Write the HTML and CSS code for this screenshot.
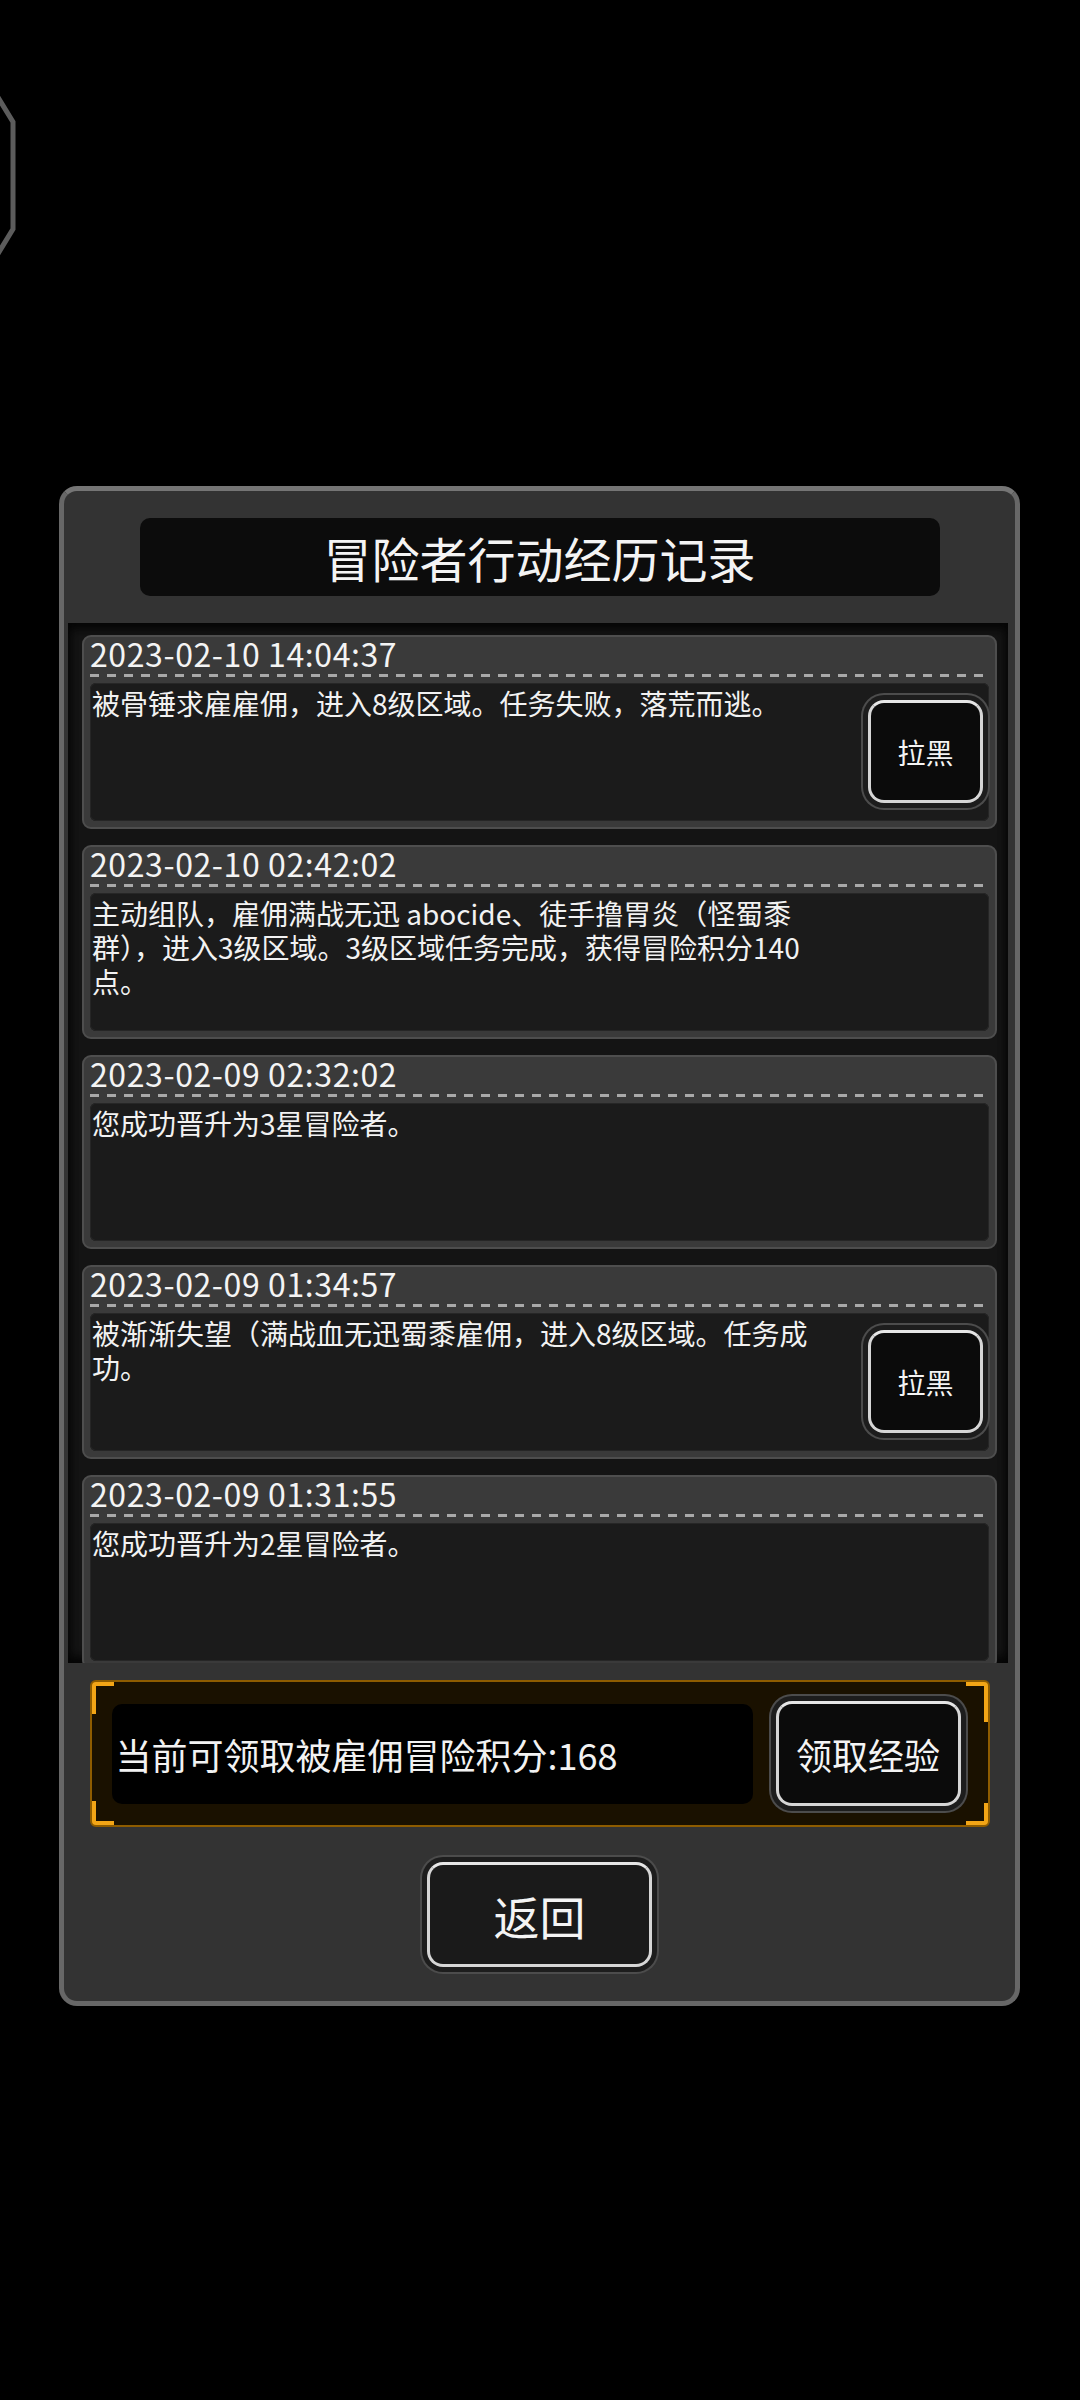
FILE: index.html
```html
<!DOCTYPE html>
<html lang="zh-CN">
<head>
  <meta charset="UTF-8" />
  <meta name="viewport" content="width=device-width, initial-scale=1.0" />
  <title>冒险者行动经历记录</title>
  <link rel="stylesheet" href="styles.css">
</head>
<body>
  <!-- half-hidden side tab on the left edge -->
  <svg class="side-tab" width="24" height="170" viewBox="0 0 24 170">
    <polyline points="-4,-2 13,26 13,133 -4,161" fill="none" stroke="#5c5c5c" stroke-width="5" stroke-linejoin="miter" />
  </svg>

  <div class="panel">
    <div class="panel-title">冒险者行动经历记录</div>

    <div class="log">
      <div class="entry">
        <div class="entry-time">2023-02-10 14:04:37</div>
        <div class="entry-rule"></div>
        <div class="entry-body">
          <p class="entry-text">被骨锤求雇雇佣，进入8级区域。任务失败，落荒而逃。</p>
          <button class="btn btn-small" type="button">拉黑</button>
        </div>
      </div>

      <div class="entry">
        <div class="entry-time">2023-02-10 02:42:02</div>
        <div class="entry-rule"></div>
        <div class="entry-body">
          <p class="entry-text">主动组队，雇佣满战无迅 abocide、徒手撸胃炎（怪蜀黍群），进入3级区域。3级区域任务完成，获得冒险积分140点。</p>
        </div>
      </div>

      <div class="entry">
        <div class="entry-time">2023-02-09 02:32:02</div>
        <div class="entry-rule"></div>
        <div class="entry-body">
          <p class="entry-text">您成功晋升为3星冒险者。</p>
        </div>
      </div>

      <div class="entry">
        <div class="entry-time">2023-02-09 01:34:57</div>
        <div class="entry-rule"></div>
        <div class="entry-body">
          <p class="entry-text">被渐渐失望（满战血无迅蜀黍雇佣，进入8级区域。任务成功。</p>
          <button class="btn btn-small" type="button">拉黑</button>
        </div>
      </div>

      <div class="entry">
        <div class="entry-time">2023-02-09 01:31:55</div>
        <div class="entry-rule"></div>
        <div class="entry-body">
          <p class="entry-text">您成功晋升为2星冒险者。</p>
        </div>
      </div>
    </div>

    <div class="claim">
      <div class="claim-info">当前可领取被雇佣冒险积分:168</div>
      <button class="btn btn-claim" type="button">领取经验</button>
    </div>

    <div class="footer">
      <button class="btn btn-back" type="button">返回</button>
    </div>
  </div>
</body>
</html>
```

FILE: styles.css
```css
body {
  margin: 0;
  width: 1080px;
  height: 2400px;
  background: #000;
  font-family: "Noto Sans CJK SC", "Noto Sans", sans-serif;
  color: #f2f2f2;
  position: relative;
  overflow: hidden;
}

.side-tab {
  position: absolute;
  left: 0;
  top: 96px;
}

.panel {
  box-sizing: border-box;
  width: 961px;
  height: 1520px;
  margin: 486px 0 0 59px;
  border: 5px solid #676767;
  border-top-color: #757575;
  border-radius: 18px;
  background: #333;
  display: flex;
  flex-direction: column;
}

.panel-title {
  width: 800px;
  height: 78px;
  margin: 27px auto 0;
  border-radius: 10px;
  background: #0c0c0c;
  font-size: 48px;
  line-height: 78px;
  text-align: center;
  color: #f4f4f4;
}

.log {
  height: 1040px;
  margin: 27px 7px 0 4px;
  padding: 12px 11px 0 14px;
  background: #141414;
  box-shadow: inset 0 6px 10px #050505, inset 0 -6px 10px #050505;
  overflow: hidden;
  box-sizing: border-box;
}

.entry {
  box-sizing: border-box;
  height: 194px;
  margin-bottom: 16px;
  border: 2px solid #4e4e4e;
  border-radius: 9px;
  background: #3a3a3a;
  display: flex;
  flex-direction: column;
  padding-bottom: 6px;
}

.entry-time {
  height: 35px;
  padding-left: 6px;
  font-size: 32px;
  letter-spacing: 0.6px;
  line-height: 33px;
  color: #f4f4f4;
}

.entry-rule {
  height: 3px;
  margin: 2px 6px 0;
  background: repeating-linear-gradient(90deg, #a9a9a9 0 9px, transparent 9px 17px);
}

.entry-body {
  flex: 1;
  margin: 6px 6px 0;
  padding: 3px 6px 0 2px;
  border-radius: 6px;
  background: #1b1b1b;
  box-shadow: inset 0 0 0 1px #262626;
  display: flex;
  align-items: flex-start;
}

.entry-text {
  width: 752px;
  margin: 0;
  font-size: 28px;
  line-height: 34px;
}

.btn {
  font-family: inherit;
  color: #f4f4f4;
  border: 3px solid #d6d6d6;
  border-top-color: #e6e6e6;
  border-radius: 16px;
  background: #0b0b0b;
  box-shadow: 0 0 0 5px #1d1d1d, 0 0 0 7px #4c4c4c;
  padding: 0;
  cursor: pointer;
}

.btn-small {
  width: 115px;
  height: 103px;
  margin: 14px 0 0 auto;
  font-size: 28px;
}

/* orange bracketed strip with the points counter */
.claim {
  box-sizing: border-box;
  width: 900px;
  height: 147px;
  margin: 17px auto 0;
  padding: 0 20px;
  border: 2px solid #8e5c00;
  border-radius: 6px;
  background-color: #1a1100;
  background-image:
    linear-gradient(#f2a516, #f2a516), linear-gradient(#f2a516, #f2a516),
    linear-gradient(#f2a516, #f2a516), linear-gradient(#f2a516, #f2a516),
    linear-gradient(#f2a516, #f2a516), linear-gradient(#f2a516, #f2a516),
    linear-gradient(#f2a516, #f2a516), linear-gradient(#f2a516, #f2a516);
  background-size:
    22px 4px, 4px 32px,
    22px 4px, 4px 40px,
    22px 4px, 4px 24px,
    22px 4px, 4px 22px;
  background-position:
    left top, left top,
    right top, right top,
    left bottom, left bottom,
    right bottom, right bottom;
  background-repeat: no-repeat;
  display: flex;
  align-items: center;
  justify-content: space-between;
}

.claim-info {
  width: 641px;
  height: 100px;
  box-sizing: border-box;
  padding-left: 4px;
  border-radius: 10px;
  background: #000;
  font-size: 36px;
  line-height: 100px;
  white-space: nowrap;
}

.btn-claim {
  width: 185px;
  height: 105px;
  margin-right: 7px;
  font-size: 36px;
}

.footer {
  display: flex;
  justify-content: center;
  margin-top: 35px;
}

.btn-back {
  width: 225px;
  height: 105px;
  background: #1a1a1a;
  font-size: 46px;
}
```
